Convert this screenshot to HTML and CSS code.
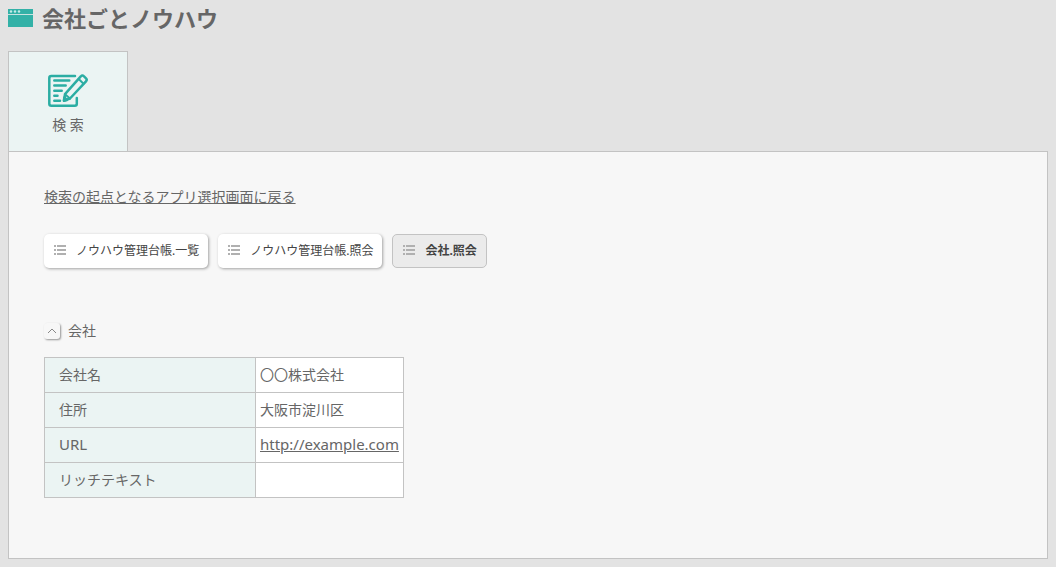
FILE: index.html
```html
<!DOCTYPE html>
<html lang="ja">
<head>
    <meta charset="UTF-8">
    <meta name="viewport" content="width=device-width, initial-scale=1.0">
    <title>会社ごとノウハウ</title>
    <link rel="stylesheet" href="styles.css">
</head>
<body>
    <header class="header">
        <svg class="header-icon" width="25" height="18" viewBox="0 0 25 18" aria-hidden="true">
            <rect width="25" height="18" fill="#33b1a7"/>
            <rect y="5" width="25" height="1" fill="#c9e3e0"/>
            <g fill="#c5ebe7">
                <circle cx="3" cy="2.5" r="1.2"/>
                <circle cx="7" cy="2.5" r="1.2"/>
                <circle cx="11" cy="2.5" r="1.2"/>
            </g>
        </svg>
        <h1>会社ごとノウハウ</h1>
    </header>
    <nav class="tabs">
        <a class="tab" href="#search">
            <svg width="40" height="34" viewBox="0 0 40 34" fill="none" stroke="#2bada3" stroke-width="2.5" stroke-linecap="round" stroke-linejoin="round" aria-hidden="true">
                <path d="M27 2H3.3Q1.3 2 1.3 4V29.7Q1.3 31.7 3.3 31.7H26.8Q28.8 31.7 28.8 29.7V24"/>
                <path d="M6.3 6.5H21.3M6.3 11.6H17.7M6.3 16.7H13.7M6.3 21.8H9.5M6.3 26.8H12"/>
                <path d="M33 2.2Q34.3 .7 35.8 2.2L38 4.3Q39.4 5.8 38 7.3L22 24.5L16 26.7L17 20.2Z" fill="#ebf4f3"/>
                <path d="M30.7 5L35.5 9.7M17 20.2L22 24.5" stroke-width="2"/>
                <path d="M16.3 23.5L19 26L16 26.7Z" fill="#2bada3"/>
            </svg>
            <span>検 索</span>
        </a>
    </nav>
    <main class="panel" id="search">
        <a class="back-link" href="#apps">検索の起点となるアプリ選択画面に戻る</a>
        <div class="steps">
            <button class="step" type="button">
                <svg class="list-icon" width="12" height="10" viewBox="0 0 12 10" fill="#b0b0b0" aria-hidden="true">
                    <path d="M0 0h2v2H0zM3 0h9v2H3zM0 4h2v2H0zM3 4h9v2H3zM0 8h2v2H0zM3 8h9v2H3z"/>
                </svg>
                ノウハウ管理台帳.一覧
            </button>
            <button class="step" type="button">
                <svg class="list-icon" width="12" height="10" viewBox="0 0 12 10" fill="#b0b0b0" aria-hidden="true">
                    <path d="M0 0h2v2H0zM3 0h9v2H3zM0 4h2v2H0zM3 4h9v2H3zM0 8h2v2H0zM3 8h9v2H3z"/>
                </svg>
                ノウハウ管理台帳.照会
            </button>
            <button class="step current" type="button">
                <svg class="list-icon" width="12" height="10" viewBox="0 0 12 10" fill="#b0b0b0" aria-hidden="true">
                    <path d="M0 0h2v2H0zM3 0h9v2H3zM0 4h2v2H0zM3 4h9v2H3zM0 8h2v2H0zM3 8h9v2H3z"/>
                </svg>
                会社.照会
            </button>
        </div>
        <section>
            <div class="section-title">
                <button class="toggle" type="button" id="toggle" aria-labelledby="companyTitle" aria-controls="company" aria-expanded="true">
                    <svg width="8" height="6" viewBox="0 0 8 6" fill="none" stroke="#888" aria-hidden="true">
                        <path d="M0 5L4 1L8 5"/>
                    </svg>
                </button>
                <h2 id="companyTitle">会社</h2>
            </div>
            <table class="detail" id="company">
                <tr>
                    <th scope="row">会社名</th>
                    <td>〇〇株式会社</td>
                </tr>
                <tr>
                    <th scope="row">住所</th>
                    <td>大阪市淀川区</td>
                </tr>
                <tr class="url">
                    <th scope="row">URL</th>
                    <td><a href="http://example.com">http://example.com</a></td>
                </tr>
                <tr>
                    <th scope="row">リッチテキスト</th>
                    <td></td>
                </tr>
            </table>
        </section>
    </main>
    <script>
        const toggle = document.getElementById('toggle');
        const company = document.getElementById('company');

        toggle.addEventListener('click', () => {
            company.hidden = !company.hidden;
            toggle.setAttribute('aria-expanded', String(!company.hidden));
        });
    </script>
</body>
</html>
```
FILE: styles.css
```css
* {
    box-sizing: border-box;
}
body {
    margin: 0;
    padding: 8px;
    background-color: #e3e3e3;
    color: #666;
    font-family: "Noto Sans", "Noto Sans CJK JP", sans-serif;
    font-size: 14px;
    line-height: 20px;
}
a {
    color: inherit;
}
.header {
    display: flex;
    align-items: center;
    gap: 9px;
    height: 20px;
    margin-bottom: 23px;
}
h1 {
    margin: 0;
    font-size: 22px;
    font-weight: bold;
    line-height: 20px;
}
.tabs {
    display: flex;
}
.tab {
    display: flex;
    flex-direction: column;
    align-items: center;
    gap: 7px;
    width: 120px;
    height: 100px;
    padding-top: 22px;
    border: 1px solid #c3c3c3;
    border-bottom: none;
    background-color: #ebf4f3;
    text-decoration: none;
}
.panel {
    padding: 35px 35px 60px;
    border: 1px solid #c3c3c3;
    background-color: #f7f7f7;
}
.back-link {
    display: inline-block;
}
.steps {
    display: flex;
    flex-wrap: wrap;
    gap: 10px;
    margin: 27px 0 53px;
}
.step {
    display: flex;
    align-items: center;
    gap: 10px;
    height: 34px;
    padding: 0 9px 2px 10px;
    border: none;
    border-radius: 5px;
    background-color: #fff;
    box-shadow: 1px 1px 3px rgba(0, 0, 0, 0.35);
    color: #444;
    font-family: inherit;
    font-size: 12px;
    cursor: pointer;
}
.step.current {
    border: 1px solid #c3c3c3;
    background-color: #ebebeb;
    box-shadow: none;
    font-weight: bold;
}
.section-title {
    display: flex;
    align-items: center;
    gap: 8px;
    margin-bottom: 16px;
}
h2 {
    margin: 0;
    font-size: 14px;
    font-weight: normal;
}
.toggle {
    display: flex;
    align-items: center;
    justify-content: center;
    width: 16px;
    height: 16px;
    padding: 0;
    border: none;
    border-radius: 3px;
    background-color: #f7f7f7;
    box-shadow: 1px 1px 2px rgba(0, 0, 0, 0.4);
    cursor: pointer;
}
.detail {
    border-collapse: collapse;
}
.detail th,
.detail td {
    height: 35px;
    padding: 0 4px;
    border: 1px solid #c3c3c3;
    background-color: #fff;
    text-align: left;
}
.detail th {
    width: 211px;
    padding: 0 14px;
    background-color: #ebf4f3;
    font-weight: normal;
}
.detail .url th,
.detail .url td {
    padding-bottom: 3px;
    font-size: 15px;
}
```
